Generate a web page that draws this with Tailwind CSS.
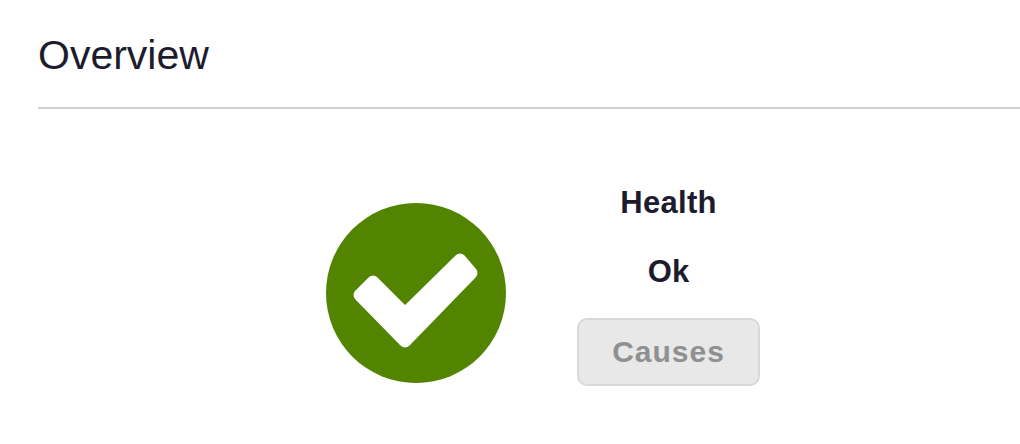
<!DOCTYPE html>
<html lang="en">
<head>
    <meta charset="UTF-8">
    <title>Overview</title>
    <script src="https://cdn.jsdelivr.net/npm/@tailwindcss/browser@4"></script>
</head>
<body class="bg-white font-['Liberation_Sans',Arial,sans-serif] text-[#1c1c2e] h-[444px] overflow-hidden">
    <div class="pl-[38px]">
        <h2 class="h-[109px] pt-[32px] border-b-2 border-[#cfcfcf] text-[41px] leading-[46px]">Overview</h2>
    </div>
    <div class="flex items-start pl-[326px] pt-[74px]">
        <svg class="mt-[20px] w-[180px] h-[180px]" viewBox="0 0 180 180">
            <circle cx="90" cy="90" r="90" fill="#528400"/>
            <!-- check -->
            <polygon points="33.5,92 47,78.5 79,110.5 134,56.5 145.5,70 79,138.5" fill="#fff" stroke="#fff" stroke-width="12" stroke-linejoin="round"/>
        </svg>
        <div class="ml-[71px] w-[183px] flex flex-col items-center font-bold text-[31px] leading-[36px]">
            <div class="mt-[2px] tracking-[0.3px]">Health</div>
            <div class="mt-[33px]">Ok</div>
            <button class="mt-[28px] w-[183px] h-[68px] rounded-[10px] border-2 border-[#d8d8d8] bg-[#e8e8e8] text-[#909090] text-[30px] tracking-[1px]">Causes</button>
        </div>
    </div>
</body>
</html>
